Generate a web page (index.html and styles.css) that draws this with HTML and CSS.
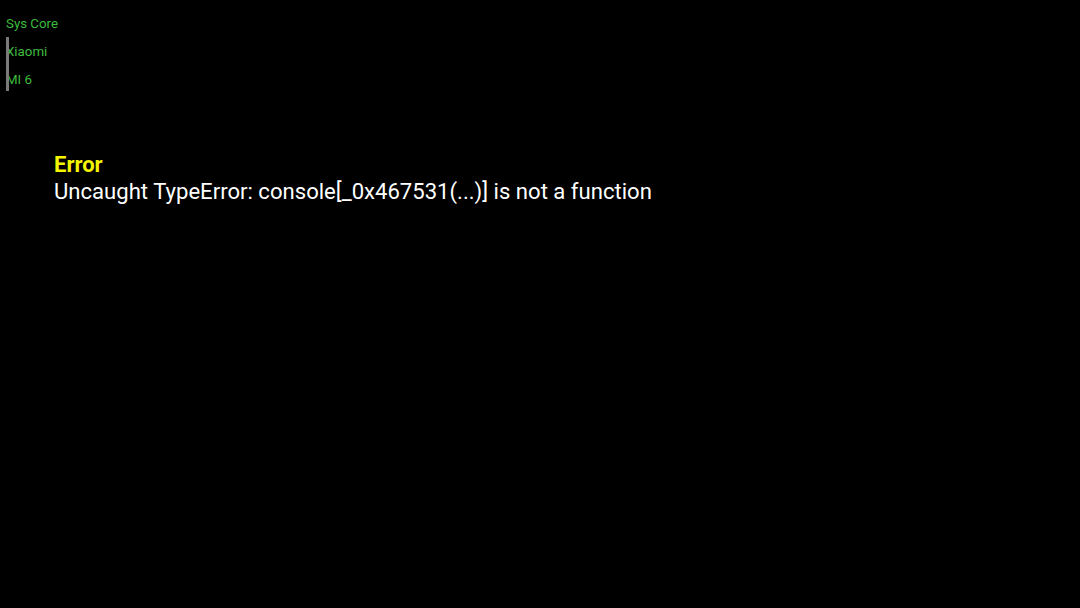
FILE: index.html
```html
<!DOCTYPE html>
<html>
<head>
<meta charset="utf-8">
<link rel="stylesheet" href="styles.css">
</head>
<body>
<nav class="menu">
  <div class="menu-item">Sys Core</div>
  <div class="sub">
    <div class="menu-item">Xiaomi</div>
    <div class="menu-item">MI 6</div>
  </div>
</nav>
<section class="error">
  <div class="error-title">Error</div>
  <div class="error-msg">Uncaught TypeError: console[_0x467531(...)] is not a function</div>
</section>
</body>
</html>
```
FILE: styles.css
```css
html, body {
  margin: 0;
  padding: 0;
  background: #000;
  width: 1080px;
  height: 608px;
  overflow: hidden;
  font-family: Roboto, "Liberation Sans", sans-serif;
}
.menu {
  padding: 10px 0 0 6px;
}
.menu-item {
  color: #3dbb3d;
  font-size: 13.3px;
  line-height: 28px;
  height: 28px;
}
.sub {
  position: relative;
}
.sub::before {
  content: "";
  position: absolute;
  left: 0;
  top: -1px;
  width: 3px;
  height: 54px;
  background: #7a7a7a;
}
.error {
  padding: 57px 0 0 54px;
}
.error-title {
  color: #f5f500;
  font-weight: 700;
  font-size: 22px;
  line-height: 27px;
}
.error-msg {
  color: #fff;
  font-size: 22.1px;
  line-height: 27px;
}
```
